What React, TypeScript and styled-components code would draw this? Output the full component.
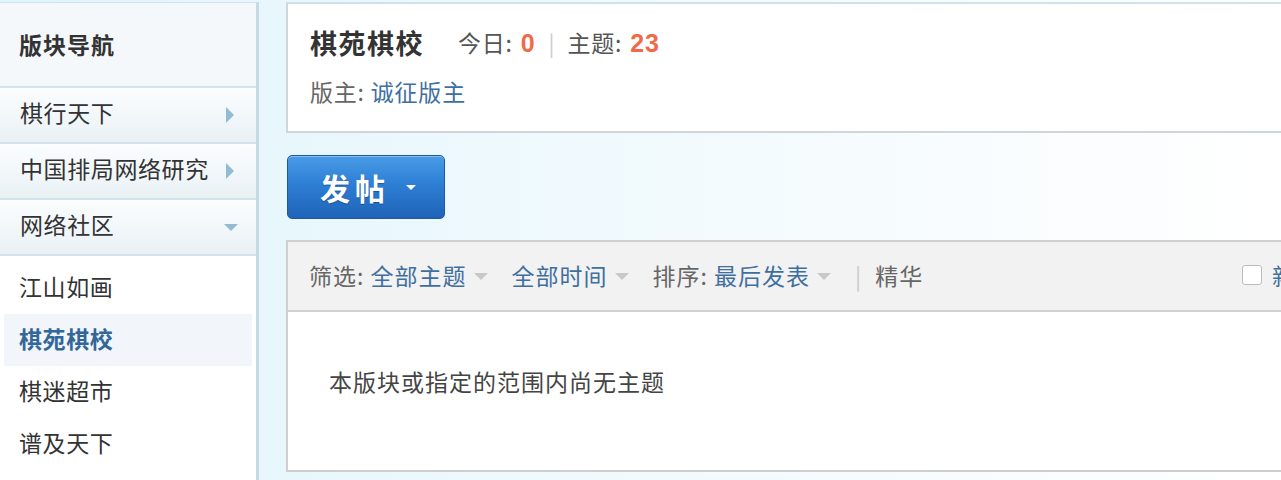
import React from 'react';
import styled, { createGlobalStyle } from 'styled-components';

const GlobalStyle = createGlobalStyle`
  html, body {
    margin: 0;
    overflow: hidden;
  }
  body {
    font-family: "Noto Sans CJK SC", "Liberation Sans", sans-serif;
    color: #333;
    background: linear-gradient(to right, #dff4fb 0%, #eef9fd 40%, #fbfdfe 85%, #ffffff 100%);
    min-height: 480px;
  }
`;

const Page = styled.div`
  display: flex;
  align-items: flex-start;
  gap: 27px;
  padding-top: 2px;
  width: 1400px;
`;

const Sidebar = styled.aside`
  width: 256px;
  flex-shrink: 0;
  min-height: 478px;
  background: #fff;
  border-top: 1px solid #d0e2ea;
  border-right: 3px solid #c6dae4;
`;

const SideHeader = styled.div`
  height: 85px;
  display: flex;
  align-items: center;
  padding: 0 0 2px 19px;
  box-sizing: border-box;
  font-size: 23px;
  letter-spacing: 1px;
  font-weight: bold;
  color: #333;
  background: #f5f8fb;
  border-bottom: 2px solid #d3e3ec;
`;

const NavRow = styled.div`
  height: 56px;
  box-sizing: border-box;
  display: flex;
  align-items: center;
  justify-content: space-between;
  padding: 0 18px 6px 20px;
  font-size: 23px;
  letter-spacing: 0.6px;
  color: #333;
  background: linear-gradient(to bottom, #fbfdfe, #e9f1f5);
  border-bottom: 2px solid #d3e3ec;
`;

const Arrow = styled.span<{ $down?: boolean }>`
  width: 0;
  height: 0;
  ${({ $down }) =>
    $down
      ? `
    margin: 6px 0 0 0;
    border-left: 7px solid transparent;
    border-right: 7px solid transparent;
    border-top: 7px solid #92bcd2;
  `
      : `
    margin: 6px 4px 0 0;
    border-top: 8px solid transparent;
    border-bottom: 8px solid transparent;
    border-left: 8px solid #92bcd2;
  `}
`;

const SubList = styled.div`
  padding: 6px 4px;
`;

const SubItem = styled.div<{ $active?: boolean }>`
  height: 52px;
  box-sizing: border-box;
  display: flex;
  align-items: center;
  padding: 0 0 4px 15px;
  font-size: 23px;
  letter-spacing: 0.6px;
  color: ${({ $active }) => ($active ? '#336699' : '#333')};
  font-weight: ${({ $active }) => ($active ? 'bold' : 'normal')};
  background: ${({ $active }) => ($active ? '#f2f6fa' : 'transparent')};
`;

const Main = styled.main`
  width: 1100px;
  flex-shrink: 0;
  display: flex;
  flex-direction: column;
`;

const InfoPanel = styled.section`
  background: #fff;
  border: 2px solid #cfd6da;
  border-top-color: #cde3ea;
  padding: 20px 22px 25px;
`;

const TitleRow = styled.div`
  display: flex;
  align-items: center;
  height: 36px;
`;

const ForumTitle = styled.h1`
  margin: 0 34px 0 0;
  font-size: 27px;
  font-weight: bold;
  color: #333;
  letter-spacing: 1.5px;
`;

const Stat = styled.span`
  font-size: 23px;
  letter-spacing: 0.8px;
  color: #555;
`;

const Num = styled.strong`
  margin-left: 2px;
  color: #f06a4a;
  font-family: "Liberation Sans", sans-serif;
  font-size: 25px;
`;

const Pipe = styled.span`
  margin: 0 13px;
  font-size: 22px;
  color: #ccc;
`;

const ModLine = styled.div`
  margin-top: 16px;
  height: 30px;
  line-height: 30px;
  font-size: 23px;
  letter-spacing: 0.8px;
  color: #666;
`;

const Link = styled.a`
  color: #3f6f9f;
  text-decoration: none;
`;

const ButtonRow = styled.div`
  padding: 22px 0 21px 1px;
`;

const PostButton = styled.button`
  width: 158px;
  height: 64px;
  display: flex;
  align-items: center;
  justify-content: center;
  gap: 16px;
  padding: 0 0 0 4px;
  border: 1px solid #22579c;
  border-radius: 5px;
  background: linear-gradient(to bottom, #4a9be6 0%, #2d7fd6 45%, #1f63b7 100%);
  box-shadow: inset 0 1px 0 rgba(255, 255, 255, 0.35);
  color: #fff;
  font-family: "Noto Sans CJK SC", sans-serif;
  font-size: 30px;
  font-weight: bold;
  letter-spacing: 5px;
  text-shadow: 0 1px 1px rgba(0, 0, 0, 0.3);
`;

const Caret = styled.span`
  width: 0;
  height: 0;
  border-left: 5px solid transparent;
  border-right: 5px solid transparent;
  border-top: 5px solid #fff;
`;

const ThreadBox = styled.section`
  background: #fff;
  border: 2px solid #cfcfcf;
`;

const FilterBar = styled.div`
  height: 70px;
  box-sizing: border-box;
  display: flex;
  align-items: center;
  padding: 0 21px 2px;
  background: #f2f2f2;
  border-bottom: 2px solid #d2d2d2;
  font-size: 23px;
  letter-spacing: 1px;
  color: #666;
`;

const FilterGroup = styled.span`
  display: flex;
  align-items: center;
  margin-right: 24px;
`;

const DropCaret = styled.span`
  width: 0;
  height: 0;
  margin: 3px 0 0 7px;
  border-left: 7px solid transparent;
  border-right: 7px solid transparent;
  border-top: 7px solid #c8c8c8;
`;

const FilterPipe = styled.span`
  margin: 0 13px 0 0;
  color: #ccc;
`;

const Spacer = styled.span`
  flex: 1;
`;

const Check = styled.span`
  width: 18px;
  height: 18px;
  border: 1px solid #bbb;
  border-radius: 3px;
  background: #fff;
  margin-right: 10px;
`;

const CheckLabel = styled.span`
  color: #3f6f9f;
  margin-right: 43px;
`;

const Empty = styled.div`
  height: 158px;
  padding: 52px 0 0 41px;
  box-sizing: border-box;
  font-size: 23px;
  letter-spacing: 1px;
  color: #444;
`;

const navRows = [
  { name: '棋行天下', open: false },
  { name: '中国排局网络研究', open: false },
  { name: '网络社区', open: true },
];

const subItems = ['江山如画', '棋苑棋校', '棋迷超市', '谱及天下'];

const App = () => {
  return (
    <>
      <GlobalStyle />
      <Page>
        <Sidebar>
          <SideHeader>版块导航</SideHeader>
          {navRows.map((r) => (
            <NavRow key={r.name}>
              {r.name}
              <Arrow $down={r.open} />
            </NavRow>
          ))}
          <SubList>
            {subItems.map((s) => (
              <SubItem key={s} $active={s === '棋苑棋校'}>{s}</SubItem>
            ))}
          </SubList>
        </Sidebar>

        <Main>
          <InfoPanel>
            <TitleRow>
              <ForumTitle>棋苑棋校</ForumTitle>
              <Stat>今日: <Num>0</Num></Stat>
              <Pipe>|</Pipe>
              <Stat>主题: <Num>23</Num></Stat>
            </TitleRow>
            <ModLine>
              版主: <Link href="#">诚征版主</Link>
            </ModLine>
          </InfoPanel>

          <ButtonRow>
            <PostButton>
              发帖
              <Caret />
            </PostButton>
          </ButtonRow>

          <ThreadBox>
            <FilterBar>
              <FilterGroup>
                筛选:&nbsp;<Link href="#">全部主题</Link>
                <DropCaret />
              </FilterGroup>
              <FilterGroup>
                <Link href="#">全部时间</Link>
                <DropCaret />
              </FilterGroup>
              <FilterGroup>
                排序:&nbsp;<Link href="#">最后发表</Link>
                <DropCaret />
              </FilterGroup>
              <FilterPipe>|</FilterPipe>
              精华
              <Spacer />
              <Check />
              <CheckLabel>新窗</CheckLabel>
            </FilterBar>
            <Empty>本版块或指定的范围内尚无主题</Empty>
          </ThreadBox>
        </Main>
      </Page>
    </>
  );
};

export default App;
